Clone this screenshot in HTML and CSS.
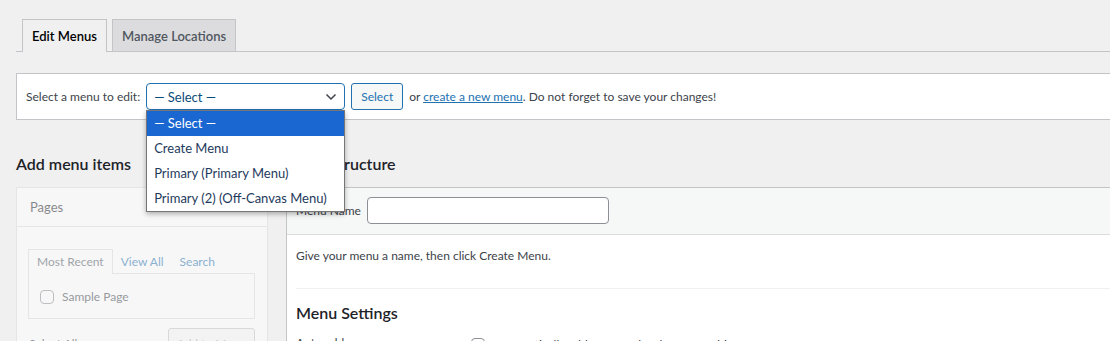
FILE: index.html
```html
<!DOCTYPE html>
<html lang="en">
<head>
    <meta charset="UTF-8">
    <title>Menus</title>
    <link rel="stylesheet" href="styles.css">
</head>
<body>
    <div class="wrap">
        <nav class="nav-tabs">
            <a class="nav-tab active">Edit Menus</a>
            <a class="nav-tab">Manage Locations</a>
        </nav>

        <div class="manage-menus">
            <span class="select-label">Select a menu to edit:</span>
            <div class="select-wrap">
                <div class="select">
                    <span>— Select —</span>
                    <svg class="chevron" width="12" height="8" viewBox="0 0 12 8"><path d="M1.5 1.5 L6 6 L10.5 1.5" fill="none" stroke="#3c434a" stroke-width="1.5"/></svg>
                </div>
                <ul class="dropdown">
                    <li class="picked">— Select —</li>
                    <li>Create Menu</li>
                    <li>Primary (Primary Menu)</li>
                    <li>Primary (2) (Off-Canvas Menu)</li>
                </ul>
            </div>
            <button class="button">Select</button>
            <span class="hint">or <a href="#">create a new menu</a>. Do not forget to save your changes!</span>
        </div>

        <div class="columns">
            <div class="side">
                <h2>Add menu items</h2>
                <div class="accordion">
                    <div class="acc-head">Pages</div>
                    <div class="acc-body">
                        <div class="inner-tabs">
                            <span class="inner-tab active">Most Recent</span>
                            <span class="inner-tab">View All</span>
                            <span class="inner-tab">Search</span>
                        </div>
                        <div class="tab-panel">
                            <label class="check"><span class="box"></span>Sample Page</label>
                        </div>
                        <div class="acc-foot">
                            <span>Select All</span>
                            <button class="button-off">Add to Menu</button>
                        </div>
                    </div>
                </div>
            </div>

            <div class="main">
                <h2>Menu structure</h2>
                <div class="menu-edit">
                    <div class="menu-header">
                        <label>Menu Name</label>
                        <input type="text" class="menu-name">
                    </div>
                    <div class="menu-body">
                        <p>Give your menu a name, then click Create Menu.</p>
                        <div class="settings">
                            <h3>Menu Settings</h3>
                            <div class="setting-row">
                                <span class="setting-name">Auto add pages</span>
                                <label class="check"><span class="box"></span>Automatically add new top-level pages to this menu</label>
                            </div>
                        </div>
                    </div>
                </div>
            </div>
        </div>
    </div>
</body>
</html>
```

FILE: styles.css
```css
body {
    margin: 0;
    background-color: #f0f0f1;
    font-family: Lato, "Noto Sans", sans-serif;
    font-size: 12px;
    color: #3c434a;
    overflow: hidden;
}
.wrap {
    padding: 19px 0 0 16px;
    width: 1160px;
}
.nav-tabs {
    display: flex;
    align-items: flex-start;
    padding-left: 6px;
    border-bottom: 1px solid #c3c4c7;
}
.nav-tab {
    margin-right: 5px;
    padding: 4px 9px 3px;
    border: 1px solid #c3c4c7;
    border-bottom: none;
    background-color: #dcdcde;
    color: #50575e;
    font-size: 13px;
    font-weight: 600;
    line-height: 24px;
}
.nav-tab.active {
    padding-bottom: 4px;
    margin-bottom: -1px;
    background-color: #f0f0f1;
    color: #000;
}
.manage-menus {
    display: flex;
    align-items: center;
    gap: 6px;
    margin-top: 21px;
    padding: 9px;
    background: white;
    border: 1px solid #c3c4c7;
    border-right: none;
}
.select-wrap {
    position: relative;
}
.select {
    display: flex;
    align-items: center;
    justify-content: space-between;
    box-sizing: border-box;
    width: 199px;
    height: 27px;
    padding: 0 7px;
    border: 1px solid #2271b1;
    border-radius: 4px;
    background: white;
    color: #0a4b78;
    font-size: 13px;
}
.dropdown {
    position: absolute;
    top: 27px;
    left: 0;
    width: 199px;
    box-sizing: border-box;
    margin: 0;
    padding: 0;
    list-style: none;
    background: white;
    border: 1px solid #767676;
    box-shadow: 0 2px 5px rgba(0, 0, 0, 0.3);
    z-index: 10;
}
.dropdown li {
    height: 25px;
    padding: 0 7px;
    line-height: 25px;
    font-size: 13px;
    color: #1e3a5c;
    white-space: nowrap;
}
.dropdown li.picked {
    background-color: #1a67d2;
    color: white;
}
.button {
    height: 27px;
    padding: 0 9px;
    border: 1px solid #2271b1;
    border-radius: 3px;
    background-color: #f6f7f7;
    color: #2271b1;
    font-family: inherit;
    font-size: 12px;
}
.hint a {
    color: #2271b1;
}
.columns {
    display: flex;
    gap: 18px;
}
h2, h3 {
    margin: 32px 0 11px;
    font-size: 16px;
    font-weight: 600;
    line-height: 24px;
    color: #1d2327;
}
.side {
    width: 252px;
    flex-shrink: 0;
}
.accordion {
    height: 200px;
    border: 1px solid #dcdcde;
    background: white;
    opacity: 0.5;
}
.acc-head {
    height: 38px;
    padding: 0 13px;
    line-height: 38px;
    font-size: 13px;
    color: #1d2327;
    border-bottom: 1px solid #dcdcde;
}
.acc-body {
    padding: 22px 12px 0 11px;
}
.inner-tabs {
    display: flex;
}
.inner-tab {
    padding: 0 7px;
    line-height: 23px;
    color: #2271b1;
    border: 1px solid transparent;
    border-bottom: none;
}
.inner-tab.active {
    position: relative;
    margin-bottom: -1px;
    padding: 0 8px;
    border-color: #dcdcde;
    background: white;
    color: #50575e;
}
.tab-panel {
    padding: 13px 11px 11px;
    border: 1px solid #dcdcde;
}
.check {
    display: flex;
    align-items: center;
    gap: 8px;
    line-height: 20px;
}
.box {
    width: 12px;
    height: 12px;
    border: 1px solid #8c8f94;
    border-radius: 4px;
    background: white;
}
.acc-foot {
    display: flex;
    justify-content: space-between;
    align-items: flex-start;
    margin-top: 9px;
    padding-left: 1px;
}
.acc-foot span {
    margin-top: 8px;
}
.button-off {
    height: 30px;
    padding: 0 8px;
    border: 1px solid #c3c4c7;
    border-radius: 3px;
    background: #f6f7f7;
    color: #a7aaad;
    font-family: inherit;
    font-size: 12px;
}
.main {
    flex: 1;
}
.menu-edit {
    height: 200px;
    border: 1px solid #c3c4c7;
    border-right: none;
    background: white;
}
.menu-header {
    display: flex;
    align-items: center;
    gap: 6px;
    padding: 9px 9px 10px;
    background-color: #f6f7f7;
    border-bottom: 1px solid #dcdcde;
}
.menu-name {
    width: 242px;
    height: 27px;
    box-sizing: border-box;
    border: 1px solid #8c8f94;
    border-radius: 4px;
}
.menu-body {
    padding-left: 9px;
}
.menu-body p {
    margin: 11px 0 0;
    line-height: 20px;
}
.settings {
    margin-top: 22px;
    border-top: 1px solid #f0f0f1;
}
.settings h3 {
    margin: 12px 0 5px;
}
.setting-row {
    display: flex;
    padding-top: 5px;
}
.setting-name {
    width: 175px;
}
```
